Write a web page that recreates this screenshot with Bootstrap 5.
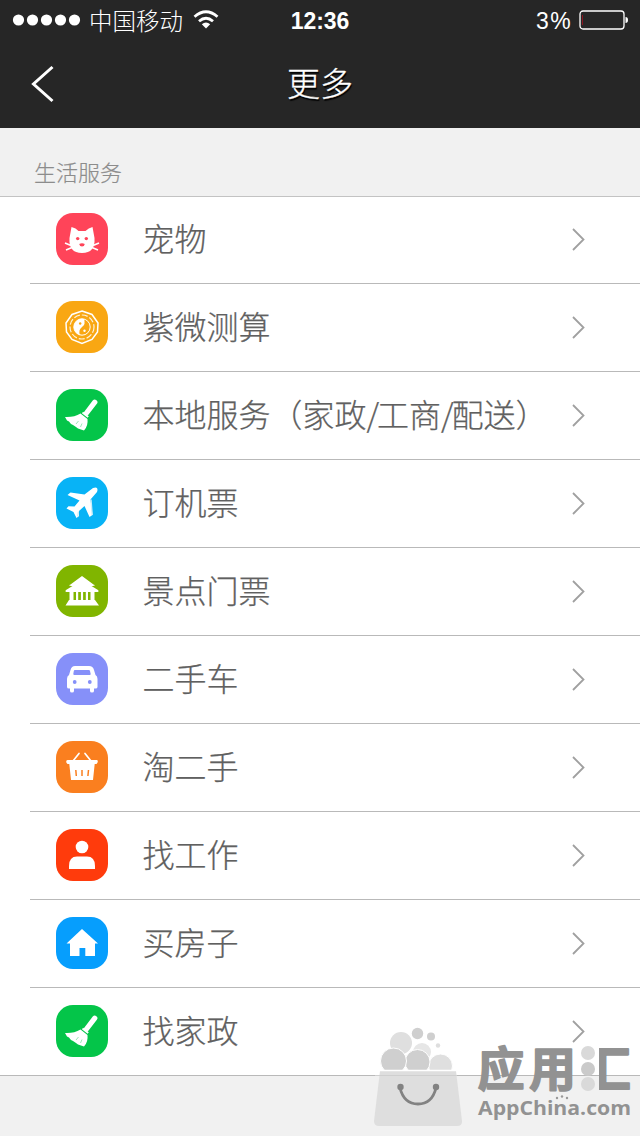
<!DOCTYPE html>
<html lang="zh-CN">
<head>
<meta charset="utf-8">
<meta name="viewport" content="width=device-width, initial-scale=1">
<title>更多</title>
<link href="https://cdn.jsdelivr.net/npm/bootstrap@5.3.0/dist/css/bootstrap.min.css" rel="stylesheet">
<style>
body{font-family:"Liberation Sans","Noto Sans CJK SC",sans-serif;background:#f1f1f1;font-weight:300}
.screen{width:640px;height:1136px}
.topbar{height:128px;background:#262626;color:#fff}
.status{height:40px;padding:0 11px 0 12px;font-size:23px;line-height:40px}
.carrier{font-size:23.5px;margin-left:8px;margin-right:10px;padding-top:3px}
.clock{font-size:23px;font-weight:700;letter-spacing:-.1px;padding-top:1px}
.battery-level{letter-spacing:1.4px;padding-top:1px;margin-right:7px}
.titlebar{height:88px;padding-left:31px}
.titlebar h1{font-size:33px;font-weight:300;line-height:90px;padding-top:2px;text-shadow:1px 2px 1px #000;-webkit-text-stroke:.3px #fff}
.section-title{height:68px;padding:32px 0 0 34px;font-size:22px;line-height:28px;color:#8c8c8c;-webkit-text-stroke:.2px #8c8c8c}
.services{background:#fff;box-shadow:inset 0 1px #c3c3c3}
.service{height:88px;padding:0 54px 2px 56px}
.service::after{content:"";position:absolute;left:30px;right:0;bottom:0;border-bottom:1px solid #b9b9b9}
.service:last-child::after{left:0}
.tile{width:52px;height:52px;border-radius:17px;margin-right:34.5px;color:#fff}
.label-text{font-family:"Noto Sans CJK SC",sans-serif;font-size:32px;line-height:40px;color:#606060;margin-top:-4px;-webkit-text-stroke:.25px #606060}
.slash{letter-spacing:-2.2px}
.watermark{left:360px;top:1016px}
</style>
</head>
<body>
<svg class="d-none" xmlns="http://www.w3.org/2000/svg">
<symbol id="cat" viewBox="0 0 52 52"><path fill="currentColor" d="M15.500 14q4.500 1 7 4h7q3-3 7-4l2 11q1 15-12.500 15T13.500 25z"/><path d="M9 30l6 2.500M10 37l6-2.500M43 30l-6 2.500M42 37l-6-2.500" stroke="currentColor" stroke-width="1.600"/><g fill="#ff4459"><circle cx="21.700" cy="25.600" r="1.700"/><circle cx="30.300" cy="25.600" r="1.700"/><path d="M23.200 31q2.800-1.400 5.600 0-.5 2.600-2.800 2.600t-2.800-2.600z"/></g></symbol>
<symbol id="bagua" viewBox="0 0 52 52"><g fill="none" stroke="currentColor"><path stroke-width="1.500" d="M26 10l10 3.500 6 8.500-.5 9L36 38.500l-10 4-10-4L10.500 31l-.5-9 6-8.500z"/><circle cx="26" cy="26" r="12" stroke-width="1.200" stroke-dasharray="6 2" opacity=".85"/><circle cx="26" cy="26" r="8.200"/></g><path fill="currentColor" d="M28 18a8.200 8.200 0 0 0-4 16q-2-5 2-8t2-8z"/><circle cx="24.200" cy="22.500" r="1.200" fill="#f9a713"/><circle cx="28.500" cy="29.800" r="1.200" fill="currentColor"/></symbol>
<symbol id="broom" viewBox="0 0 52 52"><path d="M38.800 13.200L30.500 24" stroke="currentColor" stroke-width="5.200" stroke-linecap="round"/><path d="M26.500 23.500l5.700 4.500" stroke="currentColor" stroke-width="2"/><path fill="currentColor" d="M24.500 24.500l7 5.500q.8 7-3.500 11.500l-3-1-3-1-2-1.500-3-2-2-1-2-2.500-2-1-2-3.500q9 .5 15.500-3.500z"/><path d="M20 35l2.500-3M24.500 38l1.500-3.500" stroke="#04c549" stroke-width=".4"/></symbol>
<symbol id="plane" viewBox="0 0 52 52"><path fill="currentColor" d="M37 11q6-2 4 4L34.500 22.500 36.500 38 33.500 40 28.500 29 23 34v5l-2.500 2-3-6-7-3.500 2-2.200 6 .2 5-6L11.500 18l3-2.500 14 2z"/><path d="M35 22.500l1.200 15.500M22.500 34.500l-.8 5" stroke="#cceefa" stroke-width="1.400"/></symbol>
<symbol id="pagoda" viewBox="0 0 52 52"><path fill="currentColor" d="M26 11l11.500 8.500q3 1-1 1.500h-1l6.500 4q2 2-2 2H12q-4 0-2-2l6.500-4h-1q-4-.5-1-1.500zM13.500 27h4v8.500h-4zM20 27h2.200v8.500H20zM24.900 27h2.200v8.500h-2.200zM29.800 27H32v8.500h-2.200zM34.500 27h4v8.500h-4zM13 35h26l4 5.500H9.500z"/></symbol>
<symbol id="car" viewBox="0 0 52 52"><path fill="currentColor" fill-rule="evenodd" d="M19 13h14q4 0 5 4l1.500 5q2 1 2 4v8q0 1.500-2 1.500H38V38q0 1.500-2 1.500t-2-1.500v-2.500H18V38q0 1.500-2 1.500T14 38v-2.500h-1q-2 0-2-1.500v-8q0-3 2-4l1.500-5q1-4 4.500-4zM18.800 17q-.8 0-1 1l-.5 3q0 1 1 1h15.400q1 0 1-1l-.7-3q-.3-1-1-1z"/><g fill="#8690f9"><circle cx="18.700" cy="29" r="1.900"/><circle cx="33.800" cy="29" r="1.900"/></g></symbol>
<symbol id="basket" viewBox="0 0 52 52"><path d="M17 20l6-7.500M35 20l-6-7.500" stroke="currentColor" stroke-width="1.700" stroke-linecap="round"/><path fill="currentColor" d="M11.500 19h29q1.500 0 1.300 1.500t-1.300 2.500h-1.800l-1.700 16H15l-1.700-16h-1.800q-1.300-1-1.300-2.500t1.300-1.500z"/><path d="M19.800 29l.5 6M26 29v6M32.500 29l-.6 6" stroke="#fa7f1f" stroke-width="1.500"/></symbol>
<symbol id="person" viewBox="0 0 52 52"><g fill="currentColor"><circle cx="26" cy="18" r="6.300"/><path d="M13 37q0-9.500 8-9.500h10q8 0 8 9.500v3H13z"/></g></symbol>
<symbol id="house" viewBox="0 0 52 52"><path fill="currentColor" d="M26 12l16 14.500h-3V39h-9.700v-8h-5.800v8H14V26.500h-3.500z"/></symbol>
<symbol id="next" viewBox="0 0 14 24"><path d="M1.500 2L12 12.500 1.500 23" fill="none" stroke="#a0a0a0" stroke-width="1.800"/></symbol>
</svg>
<div class="screen position-relative overflow-hidden">
<header class="topbar">
  <div class="status d-flex align-items-center position-relative">
    <svg width="69" height="12"><g fill="#fff"><circle cx="6.500" cy="6" r="5.600"/><circle cx="20.500" cy="6" r="5.600"/><circle cx="34.500" cy="6" r="5.600"/><circle cx="48.500" cy="6" r="5.600"/><circle cx="62.500" cy="6" r="5.600"/></g></svg>
    <span class="carrier">中国移动</span>
    <svg width="26" height="20" viewBox="0 0 26 20"><g fill="none" stroke="#fff" stroke-width="2.800"><path d="M1.500 6.800q11.500-10 23 0M6 11.300q7-6 14 0"/></g><path fill="#fff" d="M8.800 14.200q4.200-3.300 8.400 0L13 18.500z"/></svg>
    <span class="clock position-absolute start-50 translate-middle-x">12:36</span>
    <span class="battery-level ms-auto">3%</span>
    <svg width="50" height="20"><rect x="1" y="1" width="44" height="18" rx="3" fill="none" stroke="#fff" stroke-width="1.300"/><path d="M3.500 5v10" stroke="#8c1420"/><path d="M46.500 7q2.500 0 2.500 3t-2.500 3z" fill="#fff"/></svg>
  </div>
  <div class="titlebar d-flex align-items-center position-relative">
    <svg width="24" height="38" viewBox="0 0 24 38"><path d="M21.500 2L2.500 19l19 17" fill="none" stroke="#fff" stroke-width="3"/></svg>
    <h1 class="m-0 position-absolute start-50 translate-middle-x">更多</h1>
  </div>
</header>
<div class="section-title">生活服务</div>
<main class="services">
  <div class="service d-flex align-items-center position-relative"><svg class="tile" style="background:#ff4459"><use href="#cat"/></svg><span class="label-text">宠物</span><svg class="ms-auto" width="15" height="24"><use href="#next"/></svg></div>
  <div class="service d-flex align-items-center position-relative"><svg class="tile" style="background:#f9a713"><use href="#bagua"/></svg><span class="label-text">紫微测算</span><svg class="ms-auto" width="15" height="24"><use href="#next"/></svg></div>
  <div class="service d-flex align-items-center position-relative"><svg class="tile" style="background:#04c549"><use href="#broom"/></svg><span class="label-text text-nowrap">本地服务（家政<span class="slash">/</span>工商<span class="slash">/</span>配送）</span><svg class="ms-auto" width="15" height="24"><use href="#next"/></svg></div>
  <div class="service d-flex align-items-center position-relative"><svg class="tile" style="background:#08b3f6"><use href="#plane"/></svg><span class="label-text">订机票</span><svg class="ms-auto" width="15" height="24"><use href="#next"/></svg></div>
  <div class="service d-flex align-items-center position-relative"><svg class="tile" style="background:#80b500"><use href="#pagoda"/></svg><span class="label-text">景点门票</span><svg class="ms-auto" width="15" height="24"><use href="#next"/></svg></div>
  <div class="service d-flex align-items-center position-relative"><svg class="tile" style="background:#8690f9"><use href="#car"/></svg><span class="label-text">二手车</span><svg class="ms-auto" width="15" height="24"><use href="#next"/></svg></div>
  <div class="service d-flex align-items-center position-relative"><svg class="tile" style="background:#fa7f1f"><use href="#basket"/></svg><span class="label-text">淘二手</span><svg class="ms-auto" width="15" height="24"><use href="#next"/></svg></div>
  <div class="service d-flex align-items-center position-relative"><svg class="tile" style="background:#ff3b0c"><use href="#person"/></svg><span class="label-text">找工作</span><svg class="ms-auto" width="15" height="24"><use href="#next"/></svg></div>
  <div class="service d-flex align-items-center position-relative"><svg class="tile" style="background:#069efd"><use href="#house"/></svg><span class="label-text">买房子</span><svg class="ms-auto" width="15" height="24"><use href="#next"/></svg></div>
  <div class="service d-flex align-items-center position-relative"><svg class="tile" style="background:#04c549"><use href="#broom"/></svg><span class="label-text">找家政</span><svg class="ms-auto" width="15" height="24"><use href="#next"/></svg></div>
</main>
<svg class="watermark position-absolute" width="280" height="120" viewBox="0 0 280 120">
  <!-- shopping bag filled with bubbles -->
  <circle cx="41" cy="27" r="11" fill="#dfdfdf"/><circle cx="62" cy="36" r="9" fill="#e6e6e6"/><circle cx="80.500" cy="50" r="12" fill="#dfdfdf" stroke="#fff"/>
  <g fill="#cfcfcf"><circle cx="57.500" cy="46" r="12.500" stroke="#fff"/><circle cx="33.500" cy="45" r="13" stroke="#fff"/><circle cx="57.500" cy="17.500" r="5.700"/><circle cx="71" cy="20.500" r="4"/><circle cx="78" cy="29.500" r="2.200" fill="#dedede"/></g>
  <path d="M20 55h76l6 50q.5 5-5 5H19q-5 0-5-5z" fill="#dedede"/>
  <path d="M19 54.500h79" stroke="#fff" stroke-width="1.500"/>
  <path d="M15 59.500h82" stroke="#cfcfcf"/>
  <path d="M40 72q4 16 18 16t18-16" fill="none" stroke="#828282" stroke-width="2.800"/><circle cx="40.500" cy="71" r="3.200" fill="#828282"/><circle cx="76" cy="71" r="3.200" fill="#828282"/>
  <!-- wordmark: the left radical of the last character is replaced by three dots -->
  <defs><clipPath id="word"><path d="M110 20h108v62H110zM239 20h41v62h-41z"/></clipPath></defs>
  <g clip-path="url(#word)" fill="#929292" stroke="#929292" stroke-width="1.600" stroke-linejoin="round" font-family="Noto Sans CJK SC" font-weight="700" font-size="47"><text x="117.500" y="70">应</text><text x="169" y="70">用</text><text x="223.500" y="69.500" stroke-width="2.200">汇</text></g>
  <g fill="#d9d9d9"><circle cx="228" cy="37" r="7"/><circle cx="228" cy="53" r="7" fill="#cacaca"/><circle cx="228" cy="68" r="7"/></g>
  <g fill="#999"><circle cx="197" cy="82" r="1.200"/><circle cx="202" cy="80.500" r="1.200"/><circle cx="207" cy="82" r="1.200"/></g>
  <text x="118" y="99" font-family="Open Sans, sans-serif" font-weight="700" font-size="19" fill="#929292" textLength="153" lengthAdjust="spacingAndGlyphs">AppChina.com</text>
</svg>
</div>
<script src="https://cdn.jsdelivr.net/npm/bootstrap@5.3.0/dist/js/bootstrap.bundle.min.js"></script>
</body>
</html>
